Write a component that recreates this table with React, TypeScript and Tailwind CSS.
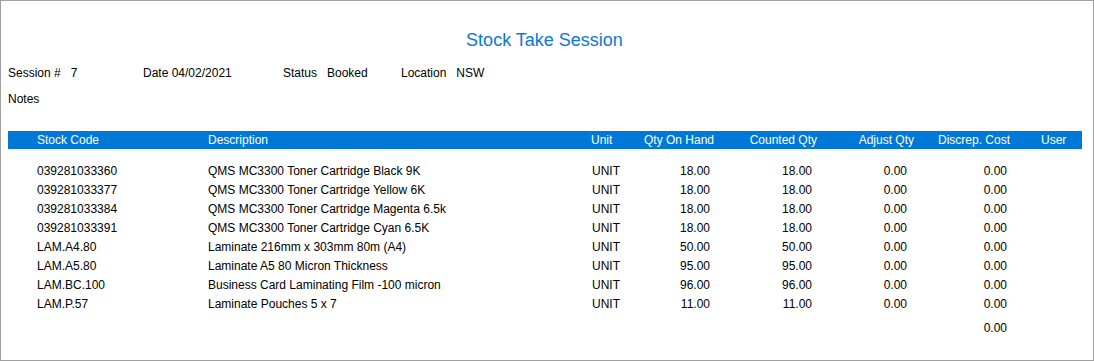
import React from "react";

const rows = [
  ["039281033360", "QMS MC3300 Toner Cartridge Black 9K", "UNIT", "18.00", "18.00", "0.00", "0.00"],
  ["039281033377", "QMS MC3300 Toner Cartridge Yellow 6K", "UNIT", "18.00", "18.00", "0.00", "0.00"],
  ["039281033384", "QMS MC3300 Toner Cartridge Magenta 6.5k", "UNIT", "18.00", "18.00", "0.00", "0.00"],
  ["039281033391", "QMS MC3300 Toner Cartridge Cyan 6.5K", "UNIT", "18.00", "18.00", "0.00", "0.00"],
  ["LAM.A4.80", "Laminate 216mm x 303mm 80m (A4)", "UNIT", "50.00", "50.00", "0.00", "0.00"],
  ["LAM.A5.80", "Laminate A5 80 Micron Thickness", "UNIT", "95.00", "95.00", "0.00", "0.00"],
  ["LAM.BC.100", "Business Card Laminating Film -100 micron", "UNIT", "96.00", "96.00", "0.00", "0.00"],
  ["LAM.P.57", "Laminate Pouches 5 x 7", "UNIT", "11.00", "11.00", "0.00", "0.00"],
];

export default function App() {
  return (
    <div
      className="w-[1094px] h-[361px] border border-[#a0a0a0] bg-white text-black text-[12px] overflow-hidden"
      style={{ fontFamily: '"Liberation Sans", Arial, sans-serif' }}
    >
      <div className="mt-[28px] h-[22px] leading-[22px] text-[18px] text-center text-[#0a78d7] pr-[5px]">
        Stock Take Session
      </div>

      <div className="mt-[13px] h-[19px] leading-[19px] pl-[7px] flex whitespace-pre">
        <div className="w-[135px]">Session #   7</div>
        <div className="w-[140px]">Date 04/02/2021</div>
        <div className="w-[118px]">Status   Booked</div>
        <div>Location   NSW</div>
      </div>

      <div className="mt-[7px] h-[19px] leading-[19px] pl-[7px]">Notes</div>

      <div className="mt-[22px] ml-[7px] w-[1074px] h-[18px] leading-[18px] bg-[#0078d7] text-white flex whitespace-nowrap">
        <div className="w-[192px] pl-[29px]">Stock Code</div>
        <div className="w-[385px] pl-[8px]">Description</div>
        <div className="w-[50px] pl-[6px]">Unit</div>
        <div className="w-[85px] pr-[6px] text-right">Qty On Hand</div>
        <div className="w-[105px] pr-[8px] text-right">Counted Qty</div>
        <div className="w-[95px] pr-[6px] text-right">Adjust Qty</div>
        <div className="w-[100px] pr-[10px] text-right">Discrep. Cost</div>
        <div className="w-[62px] pl-[21px]">User</div>
      </div>

      <div className="mt-[13px] ml-[7px] w-[1074px]">
        {rows.map((r) => (
          <div key={r[0]} className="h-[19px] leading-[19px] flex whitespace-nowrap">
            <div className="w-[192px] pl-[29px]">{r[0]}</div>
            <div className="w-[385px] pl-[8px]">{r[1]}</div>
            <div className="w-[50px] pl-[7px]">{r[2]}</div>
            <div className="w-[85px] pr-[10px] text-right">{r[3]}</div>
            <div className="w-[105px] pr-[13px] text-right">{r[4]}</div>
            <div className="w-[95px] pr-[13px] text-right">{r[5]}</div>
            <div className="w-[100px] pr-[13px] text-right">{r[6]}</div>
            <div className="w-[62px]" />
          </div>
        ))}
        <div className="mt-[5px] h-[19px] leading-[19px] flex">
          <div className="w-[912px]" />
          <div className="w-[100px] pr-[13px] text-right">0.00</div>
        </div>
      </div>
    </div>
  );
}
